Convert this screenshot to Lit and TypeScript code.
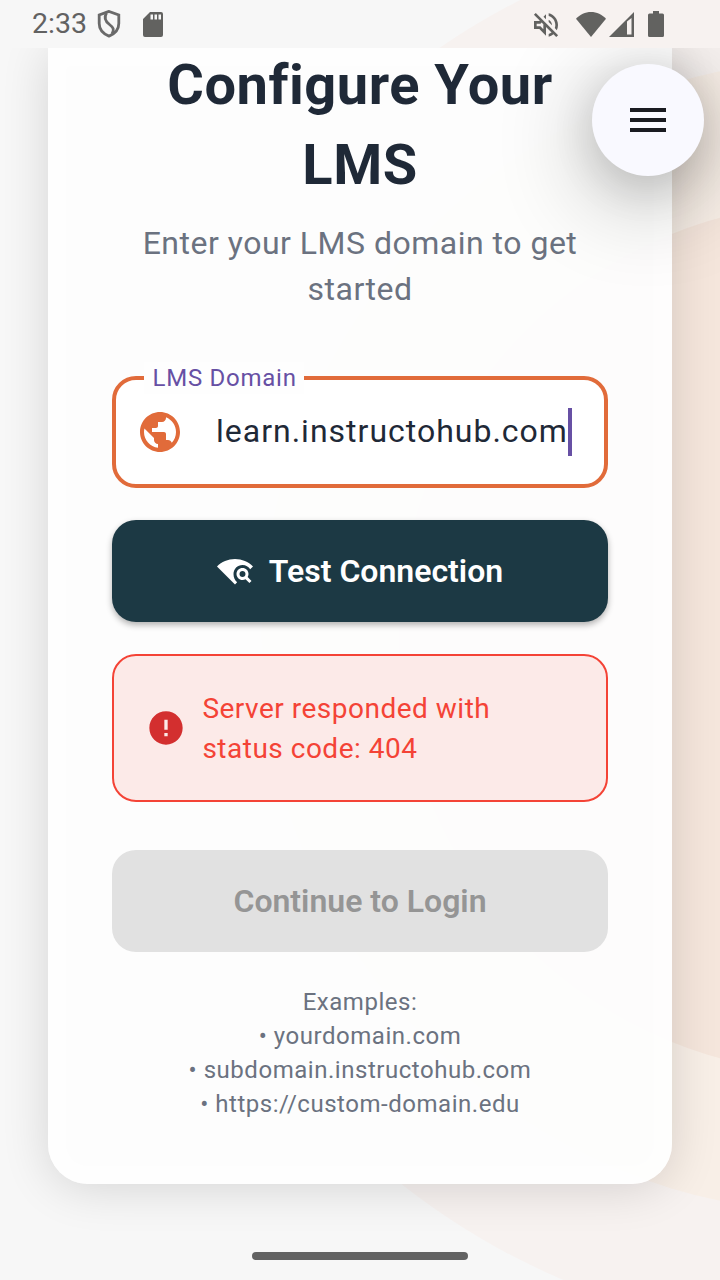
import { LitElement, html, css } from "lit";
import { customElement } from "lit/decorators.js";

@customElement("status-bar")
class StatusBar extends LitElement {
  static styles = css`
    :host { display: flex; height: 48px; align-items: center; padding: 0 56px 0 32px; box-sizing: border-box; color: #626262; fill: #626260; flex: none; }
    .time { font-size: 28.5px; line-height: 48px; letter-spacing: 0; width: 58px; }
    .shield { margin-left: 6px; }
    .sd { margin-left: 21px; }
    .vol { margin-left: auto; margin-top: 1px; }
    .wifi { margin-left: 14px; }
    .signal { margin-left: 3px; }
    .battery { margin-left: 14px; }
    svg { display: block; flex: none; }
  `;
  render() {
    return html`
      <span class="time">2:33</span>
      <svg class="shield" width="26" height="30" viewBox="0 0 26 30" fill="none" stroke="#6a6a6a" stroke-width="2.8">
        <path d="M13 2.4 3.2 6v8.500c0 6 4.100 10.300 9.800 12.600 5.700-2.300 9.800-6.600 9.800-12.600V6Z"/>
        <path d="M10.500 4C7.500 9 9.500 12.500 13.500 15.500S18.500 20.500 16 25"/>
      </svg>
      <svg class="sd" width="20" height="25" viewBox="0 0 20 25">
        <path fill-rule="evenodd" d="M7 0h11a2 2 0 0 1 2 2v21a2 2 0 0 1-2 2H2a2 2 0 0 1-2-2V7ZM7.500 2.500v5h2.500V2.500Zm4 0v5H14V2.500Zm4 0v5H18V2.500Z"/>
      </svg>
      <svg class="vol" width="32" height="32" viewBox="0 0 24 24">
        <path d="M4.340 2.930 2.930 4.340 7.290 8.700 7 9H3v6h4l5 5v-6.590l4.180 4.180c-.65.49-1.380.88-2.180 1.110v2.060c1.340-.3 2.570-.92 3.610-1.750l2.050 2.050 1.410-1.410L4.340 2.930zM10 15.170 7.830 13H5v-2h2.830l.88-.88L10 11.410v3.760zM19 12c0 .82-.15 1.610-.41 2.340l1.530 1.530c.56-1.170.88-2.480.88-3.870 0-4.280-2.990-7.860-7-8.770v2.060c2.890.86 5 3.540 5 6.710zm-7-8-1.880 1.880L12 7.760V4zm4.500 8c0-1.770-1.020-3.290-2.500-4.030v1.790l2.480 2.480c.01-.08.02-.16.02-.24z"/>
      </svg>
      <svg class="wifi" width="30" height="25" viewBox="0 0 30 25"><path d="M15 25 0 6.700C4 2.500 9.200 0 15 0s11 2.500 15 6.700Z"/></svg>
      <svg class="signal" width="25" height="25" viewBox="0 0 25 25"><path fill-rule="evenodd" d="M25 0v25H0ZM18 9.500V22.500h4.500V6Z"/></svg>
      <svg class="battery" width="16" height="26" viewBox="0 0 16 26"><path d="M5 0h6v2.500h3.500a1.500 1.500 0 0 1 1.500 1.500v20.500a1.500 1.500 0 0 1-1.500 1.500h-13A1.500 1.500 0 0 1 0 24.500V4a1.500 1.500 0 0 1 1.500-1.500H5Z"/></svg>
    `;
  }
}

@customElement("app-root")
class AppRoot extends LitElement {
  static styles = css`
    :host { display: flex; flex-direction: column; position: relative; width: 720px; height: 1280px; overflow: hidden; background: #f7f7f7; font-family: Roboto, sans-serif; }
    .backdrop { position: absolute; inset: 0; }
    status-bar, .content { position: relative; }
    .content { flex: 1; overflow: hidden; display: flex; flex-direction: column; }
    .card { margin: 0 48px; height: 1136px; box-sizing: border-box; padding: 0 64px; border-radius: 0 0 40px 40px; background: rgba(253,253,253,.96); box-shadow: 0 4px 48px rgba(0,0,0,.14), inset 0 0 4px 20px rgba(255,255,255,.4); display: flex; flex-direction: column; }
    h1 { margin: -3px 0 0; font-size: 56px; line-height: 80px; font-weight: 700; letter-spacing: .5px; color: #1f2937; text-align: center; }
    .sub { margin: 15px 0 0; font-size: 32px; line-height: 46px; letter-spacing: .5px; color: #6b7280; text-align: center; }
    .field { margin-top: 64px; height: 112px; box-sizing: border-box; border: 4px solid #e16b3a; border-radius: 24px; background: #fff; display: flex; align-items: center; padding-left: 20px; position: relative; }
    .label { position: absolute; left: 28px; top: -18px; height: 32px; padding: 0 7.500px 0 8.500px; font-size: 24px; line-height: 32px; letter-spacing: .75px; color: #6750a4; background: #fefefe; }
    .value { margin-left: 32px; padding-bottom: 2px; font-size: 32px; line-height: 48px; letter-spacing: 1px; color: #1f2937; white-space: nowrap; }
    .caret { width: 4px; height: 48px; background: #6750a4; flex: none; }
    .btn { height: 102px; flex: none; border: 0; border-radius: 24px; font: 600 32px/1 Roboto, sans-serif; display: flex; align-items: center; justify-content: center; gap: 16px; padding: 0; }
    .test { margin-top: 32px; background: #1c3944; color: #fff; box-shadow: 0 3px 6px rgba(0,0,0,.3); }
    .error { margin-top: 32px; height: 148px; box-sizing: border-box; flex: none; border: 2px solid #f44336; border-radius: 24px; background: #fceae8; display: flex; align-items: center; padding-left: 32px; gap: 16.400px; font-size: 28px; line-height: 40px; letter-spacing: .5px; color: #f44336; }
    .error span { padding-top: 2px; }
    .next { margin-top: 48px; background: #e1e1e1; color: #959595; }
    .examples { margin-top: 33px; font-size: 24px; line-height: 34px; letter-spacing: .53px; color: #6b7280; text-align: center; }
    .fab { position: absolute; left: 592px; top: 16px; width: 112px; height: 112px; border-radius: 50%; border: 0; padding: 0; background: #f9f9ff; display: flex; align-items: center; justify-content: center; box-shadow: 0 20px 96px rgba(0,0,0,.32), 0 10px 44px rgba(0,0,0,.12); }
    .handle { position: absolute; left: 252px; bottom: 20px; width: 216px; height: 8px; border-radius: 4px; background: #626262; }
    svg { display: block; flex: none; }
  `;
  render() {
    return html`
      <svg class="backdrop" width="720" height="1280" viewBox="0 0 720 1280">
        <circle cx="839" cy="630" r="706" fill="#f7f2f0"/>
        <circle cx="838" cy="636" r="577" fill="#f8efe7"/>
        <circle cx="834" cy="638" r="435.5" fill="#f5e6dc"/>
      </svg>
      <status-bar></status-bar>
      <main class="content">
        <section class="card">
          <h1>Configure Your<br>LMS</h1>
          <p class="sub">Enter your LMS domain to get<br>started</p>
          <div class="field">
            <span class="label">LMS Domain</span>
            <svg width="48" height="48" viewBox="0 0 24 24" fill="#e16b3a"><path d="M12 2C6.480 2 2 6.480 2 12s4.480 10 10 10 10-4.480 10-10S17.520 2 12 2zm-1 17.930c-3.950-.49-7-3.850-7-7.930 0-.62.08-1.210.21-1.790L9 15v1c0 1.100.9 2 2 2v1.930zm6.900-2.540c-.26-.81-1-1.390-1.900-1.390h-1v-3c0-.55-.45-1-1-1H8v-2h2c.55 0 1-.45 1-1V7h2c1.100 0 2-.9 2-2v-.41c2.930 1.190 5 4.060 5 7.410 0 2.080-.8 3.970-2.100 5.390z"/></svg>
            <span class="value">learn.instructohub.com</span><span class="caret"></span>
          </div>
          <button class="btn test">
            <svg width="36" height="36" viewBox="0 0 24 24" fill="#fff"><path d="M11 14c0-3.360 2.640-6 6-6 2.200 0 4.080 1.130 5.130 2.860L24 8.980C20.930 5.900 16.690 4 12 4S3.070 5.900 0 8.980L12 21l1.430-1.430C11.980 18.440 11 16.340 11 14z"/><path d="M21 14c0-2.240-1.760-4-4-4s-4 1.760-4 4 1.760 4 4 4c.75 0 1.440-.21 2.030-.56L21.590 20 23 18.590l-2.560-2.560c.35-.59.56-1.280.56-2.030zm-6 0c0-1.120.88-2 2-2s2 .88 2 2-.88 2-2 2-2-.88-2-2z"/></svg>
            <span>Test Connection</span>
          </button>
          <div class="error">
            <svg width="40" height="40" viewBox="0 0 24 24" fill="#d32f2f"><path d="M12 2C6.480 2 2 6.480 2 12s4.480 10 10 10 10-4.480 10-10S17.520 2 12 2zm1 15h-2v-2h2v2zm0-4h-2V7h2v6z"/></svg>
            <span>Server responded with<br>status code: 404</span>
          </div>
          <button class="btn next">Continue to Login</button>
          <div class="examples">Examples:<br>• yourdomain.com<br>• subdomain.instructohub.com<br>• https://custom-domain.edu</div>
        </section>
        <button class="fab" aria-label="Menu">
          <svg width="48" height="48" viewBox="0 0 24 24" fill="#1a1b21"><path d="M3 18h18v-2H3v2zm0-5h18v-2H3v2zm0-7v2h18V6H3z"/></svg>
        </button>
      </main>
      <div class="handle"></div>
    `;
  }
}
